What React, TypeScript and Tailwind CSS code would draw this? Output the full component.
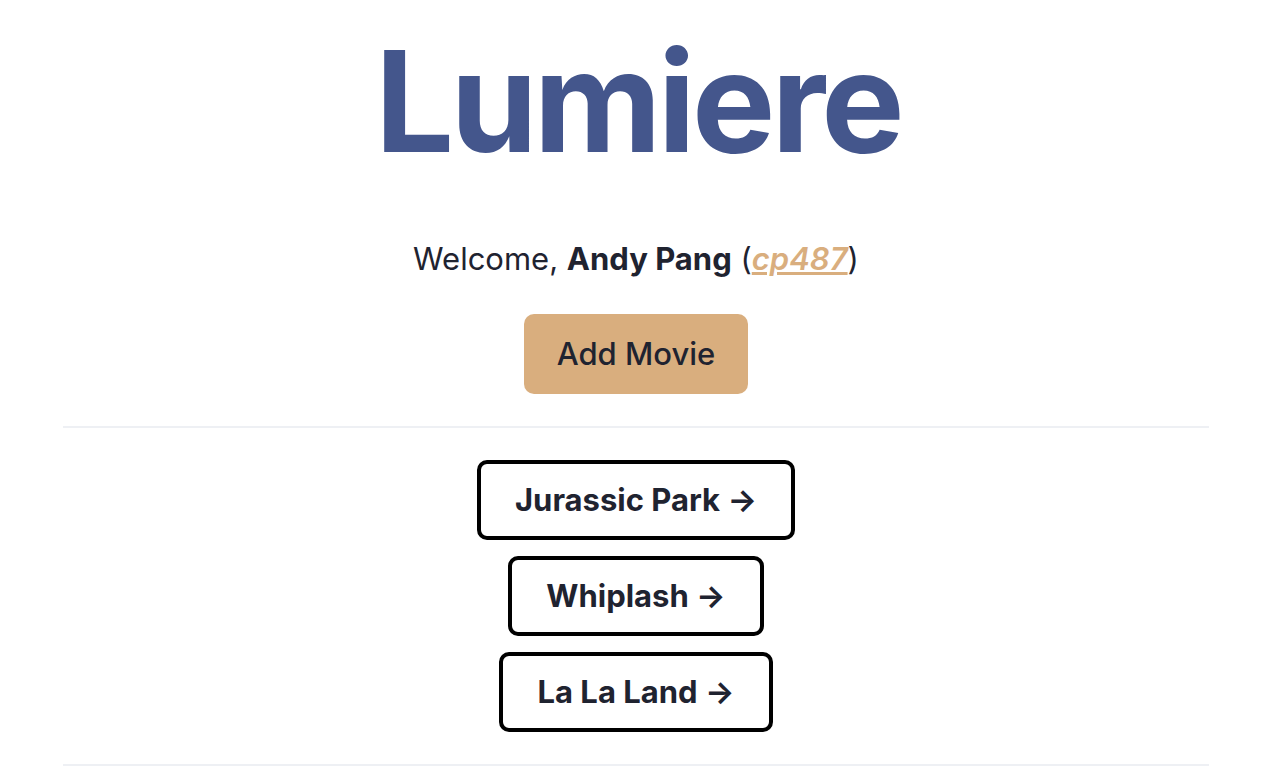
import React from "react";

const movies = ["Jurassic Park", "Whiplash", "La La Land"];

export default function App() {
  return (
    <div className="min-h-screen bg-white text-[#1f2330]" style={{ fontFamily: "Inter, 'Noto Sans', sans-serif" }}>
      <div className="ml-[63px] w-[1146px] flex flex-col items-center">
        <h1 className="mt-[31px] pl-[4px] text-[140px] leading-[140px] font-bold tracking-[-3.8px] text-[#44568c]">Lumiere</h1>
        <p className="mt-[70px] text-[31px] leading-[36px]">
          Welcome, <span className="font-bold">Andy Pang</span> (
          <a href="#" className="italic font-semibold underline text-[#d9ae7e]">cp487</a>)
        </p>
        <button className="mt-[37px] h-[80px] px-[33px] rounded-[10px] bg-[#d9ae7e] text-[31px] leading-[36px] font-medium text-[#1f2330]">
          Add Movie
        </button>
        <div className="mt-[32px] h-[2px] w-full bg-[#eef0f4]" />
        <div className="mt-[32px] flex flex-col items-center gap-4">
          {movies.map((m) => (
            <button
              key={m}
              className="h-[80px] px-[34px] rounded-[10px] border-4 border-black bg-white text-[31px] leading-[36px] font-bold text-[#1f2330]"
            >
              {m} →
            </button>
          ))}
        </div>
        <div className="mt-[32px] h-[2px] w-full bg-[#eef0f4]" />
      </div>
    </div>
  );
}
